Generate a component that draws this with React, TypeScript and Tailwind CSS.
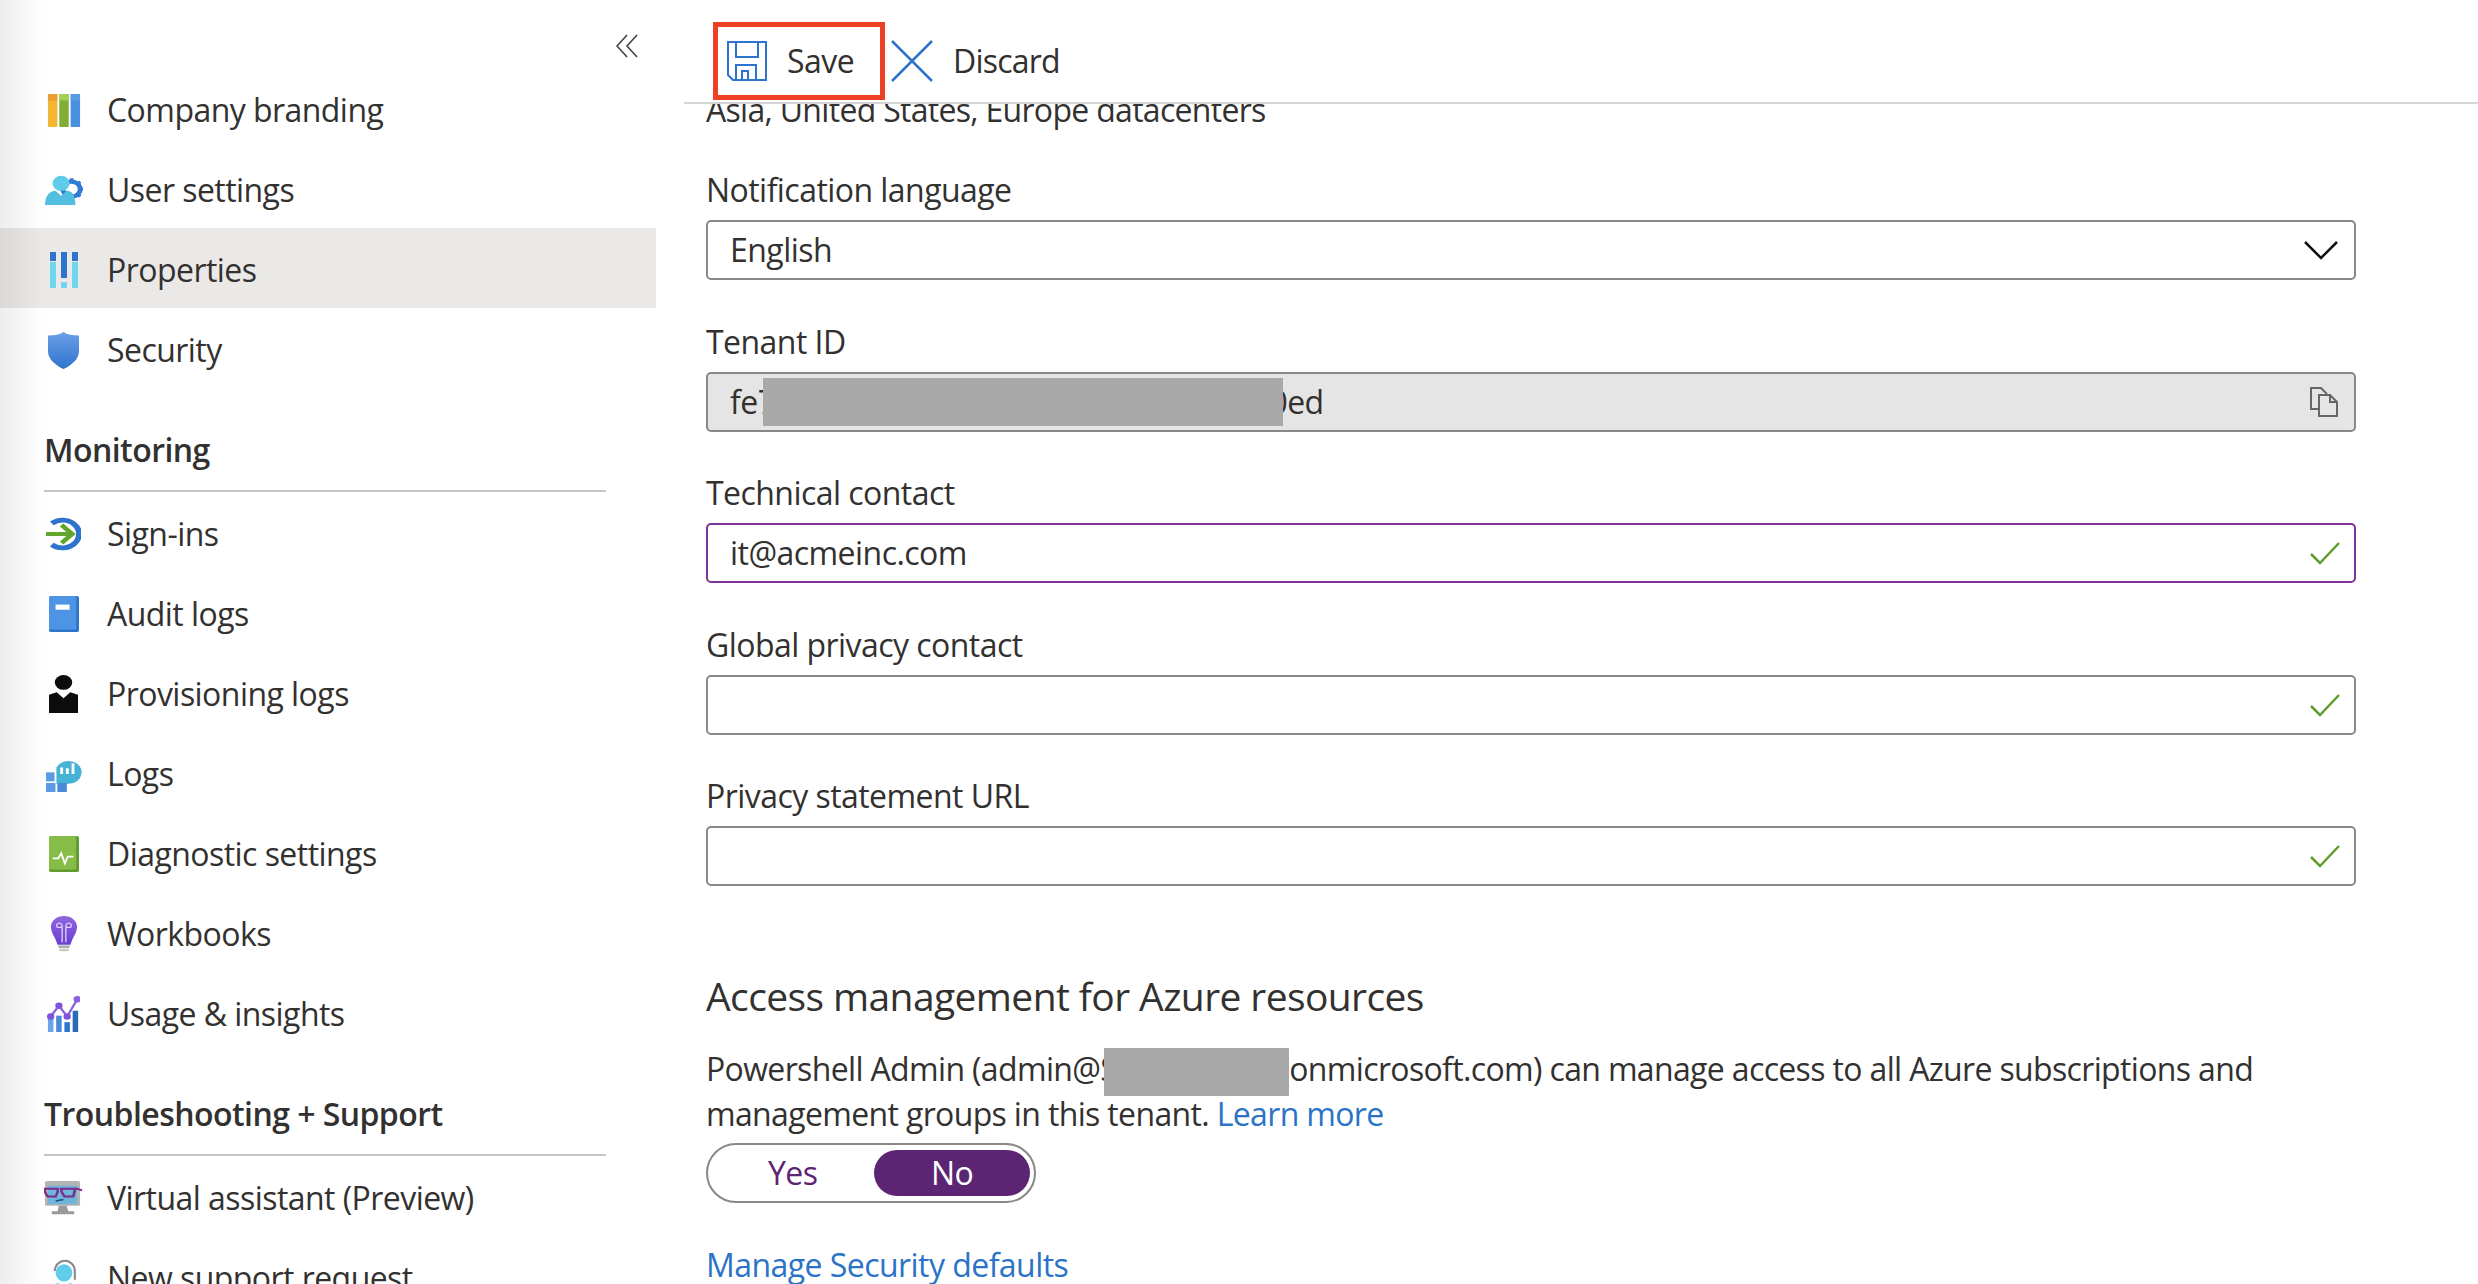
import type { ReactNode } from "react";

const BrandingIcon = () => (
  <svg width="34" height="33" viewBox="0 0 36 36" preserveAspectRatio="none">
    <rect x="1" y="0" width="10" height="36" rx="1" fill="#f2b632" />
    <rect x="1" y="0" width="10" height="7" fill="#ee9c35" />
    <rect x="13" y="0" width="10" height="36" rx="1" fill="#7fae36" />
    <rect x="13" y="0" width="10" height="7" fill="#a3cf55" />
    <rect x="25" y="0" width="10" height="36" rx="1" fill="#4a90e2" />
    <rect x="25" y="0" width="10" height="7" fill="#5a9be6" />
  </svg>
);

const UserSettingsIcon = () => (
  <svg width="38" height="30" viewBox="0 0 40 36" preserveAspectRatio="none">
    <circle cx="28" cy="17" r="9" fill="none" stroke="#2f7bd6" strokeWidth="5" />
    <path d="M28 4v4M28 26v4M15 17h4M37 17h3M19 8l3 3M34 23l3 3M37 8l-3 3" stroke="#2f7bd6" strokeWidth="4" />
    <circle cx="17" cy="10" r="9" fill="#5fcdea" />
    <path d="M0 36c0-11 5-17 11-17l6 6 6-6c6 0 9 6 9 17z" fill="#52bfe0" />
  </svg>
);

const PropertiesIcon = () => (
  <svg width="30" height="36" viewBox="0 0 30 36">
    <rect x="1" y="0" width="6" height="9" fill="#2f74cc" />
    <rect x="1" y="10" width="6" height="26" fill="#6fd6ee" />
    <rect x="12" y="0" width="6" height="26" fill="#2f74cc" />
    <rect x="12" y="30" width="6" height="6" fill="#6fd6ee" />
    <rect x="23" y="0" width="6" height="9" fill="#2f74cc" />
    <rect x="23" y="10" width="6" height="26" fill="#6fd6ee" />
  </svg>
);

const SecurityIcon = () => (
  <svg width="31" height="37" viewBox="0 0 34 42" preserveAspectRatio="none">
    <defs>
      <linearGradient id="shield" x1="0" y1="0" x2="0" y2="1">
        <stop offset="0" stopColor="#6d9fe8" />
        <stop offset="1" stopColor="#2f74cc" />
      </linearGradient>
    </defs>
    <path d="M17 0c4 3 10 4 17 4v18c0 9-9 16-17 20C9 38 0 31 0 22V4c7 0 13-1 17-4z" fill="url(#shield)" />
  </svg>
);

const SignInsIcon = () => (
  <svg width="35" height="36" viewBox="0 0 36 44" preserveAspectRatio="none">
    <path d="M6 9a17 17 0 1 1 0 26" fill="none" stroke="#2f74cc" strokeWidth="6" />
    <path d="M0 22h26M16 11l11 11-11 11" fill="none" stroke="#63a62d" strokeWidth="5" />
  </svg>
);

const AuditIcon = () => (
  <svg width="30" height="36" viewBox="0 0 32 42" preserveAspectRatio="none">
    <rect x="0" y="0" width="32" height="42" rx="2" fill="#2f74cc" />
    <path d="M0 3c0-2 1-3 3-3h26v39H0z" fill="#4e94e4" />
    <rect x="7" y="10" width="15" height="6" fill="#fff" />
  </svg>
);

const ProvisioningIcon = () => (
  <svg width="29" height="38" viewBox="0 0 30 46" preserveAspectRatio="none">
    <circle cx="15" cy="9" r="9" fill="#0c0c0c" />
    <path d="M0 24l8-3 7 7 7-7 8 3v22H0z" fill="#0c0c0c" />
  </svg>
);

const LogsIcon = () => (
  <svg width="36" height="36" viewBox="0 0 38 44" preserveAspectRatio="none">
    <path d="M11 14a14 14 0 1 1 13 20H11z" fill="#46b3d6" />
    <rect x="15" y="14" width="3" height="8" fill="#fff" />
    <rect x="21" y="15" width="3" height="7" fill="#fff" />
    <rect x="27" y="9" width="3" height="13" fill="#fff" />
    <rect x="0" y="20" width="9" height="11" fill="#5b9be6" />
    <rect x="0" y="33" width="10" height="11" fill="#5b9be6" />
    <rect x="12" y="33" width="10" height="11" fill="#4a8ad8" />
  </svg>
);

const DiagnosticIcon = () => (
  <svg width="30" height="36" viewBox="0 0 32 42" preserveAspectRatio="none">
    <rect x="0" y="0" width="32" height="42" rx="2" fill="#5f9b2e" />
    <path d="M0 3c0-2 1-3 3-3h26v39H0z" fill="#86bd48" />
    <path d="M4 26h6l3-6 4 12 3-8h6" fill="none" stroke="#fff" strokeWidth="2" />
  </svg>
);

const WorkbooksIcon = () => (
  <svg width="26" height="36" viewBox="0 0 28 44" preserveAspectRatio="none">
    <defs>
      <linearGradient id="bulb" x1="0" y1="0" x2="0" y2="1">
        <stop offset="0" stopColor="#8f66e0" />
        <stop offset="1" stopColor="#6a3fd0" />
      </linearGradient>
    </defs>
    <path d="M14 0c8 0 14 6 14 13 0 8-5 13-7 22H7C5 26 0 21 0 13 0 6 6 0 14 0z" fill="url(#bulb)" />
    <path d="M12 32V12a3 3 0 1 0-5 2h5M16 32V12a3 3 0 1 1 5 2h-5" fill="none" stroke="#d9ccf6" strokeWidth="1.5" />
    <rect x="8" y="36" width="12" height="3" fill="#a9a9a9" />
    <rect x="9" y="40" width="10" height="3" fill="#c8c8c8" />
  </svg>
);

const UsageIcon = () => (
  <svg width="33" height="36" viewBox="0 0 36 44" preserveAspectRatio="none">
    <rect x="1" y="28" width="6" height="16" fill="#6aa4ea" />
    <rect x="10" y="24" width="6" height="20" fill="#4a8ad8" />
    <rect x="19" y="32" width="6" height="12" fill="#2f74cc" />
    <rect x="28" y="18" width="6" height="26" fill="#2c6bb8" />
    <path d="M4 25l9-13 9 13 11-21" fill="none" stroke="#8a5fe0" strokeWidth="2.5" />
    <circle cx="4" cy="25" r="4" fill="#7e52dc" />
    <circle cx="13" cy="12" r="4" fill="#7e52dc" />
    <circle cx="22" cy="25" r="4" fill="#7e52dc" />
    <circle cx="33" cy="4" r="4" fill="#8a5fe0" />
  </svg>
);

const AssistantIcon = () => (
  <svg width="39" height="34" viewBox="0 0 40 44" preserveAspectRatio="none">
    <rect x="1" y="0" width="36" height="32" rx="2" fill="#b4b4b4" />
    <rect x="4" y="6" width="30" height="24" fill="#6fb5da" />
    <path d="M15 32h8l2 7h6v4H8v-4h6z" fill="#9a9a9a" />
    <path d="M0 10h14v4l-2 6H4l-2-3zM16 10h18l5 2M18 10h14l-2 10h-9l-3-6z" fill="none" stroke="#7c2a8c" strokeWidth="2.5" />
    <path d="M12 26l8-2" stroke="#1f4f8a" strokeWidth="2" />
  </svg>
);

const SupportIcon = () => (
  <svg width="30" height="38" viewBox="0 0 36 44" preserveAspectRatio="none">
    <path d="M7 14a12 12 0 0 1 24 0v10" fill="none" stroke="#8a8a8a" strokeWidth="2.5" />
    <circle cx="18" cy="16" r="10" fill="#5fcdea" />
    <path d="M0 44c0-11 5-16 11-16l7 6 7-6c6 0 9 5 9 16z" fill="#52bfe0" />
  </svg>
);

const NavRow = ({ icon, label, active }: { icon: ReactNode; label: string; active?: boolean }) => (
  <div className={`flex h-[80px] items-center pl-[44px] pt-[4px] ${active ? "bg-[#ebe9e7]" : ""}`}>
    <span className="flex w-[63px] shrink-0 items-center">
      <span className="flex w-[39px] justify-center">{icon}</span>
    </span>
    <span className="whitespace-nowrap">{label}</span>
  </div>
);

const SectionHeading = ({ title }: { title: string }) => (
  <div className="ml-[44px] mr-[50px] mt-[40px] h-[64px] border-b-2 border-[#c8c6c4] font-semibold">{title}</div>
);

const Field = ({
  label,
  children,
  className = "border-[#8a8886]",
}: {
  label: string;
  children?: ReactNode;
  className?: string;
}) => (
  <div>
    <div className="flex h-[44px] items-center">{label}</div>
    <div className={`mt-[8px] flex h-[60px] items-center justify-between overflow-hidden rounded-[5px] border-2 pl-[22px] pr-[16px] ${className}`}>
      {children}
    </div>
  </div>
);

const Check = () => (
  <svg className="-mr-[3px] ml-auto shrink-0" width="32" height="24" viewBox="0 0 32 24">
    <path d="M2 13l9 9L30 2" fill="none" stroke="#5f9e2f" strokeWidth="2.5" />
  </svg>
);

export default function App() {
  return (
    <div className="flex h-[1284px] w-[2478px] overflow-hidden bg-white font-['Open_Sans',sans-serif] text-[32px] leading-[44px] tracking-[-0.55px] text-[#323130]">
      {/* Left menu */}
      <aside className="relative w-[656px] shrink-0 overflow-hidden">
        <div className="flex h-[68px] items-start justify-end pr-[18px] pt-[34px]">
          <svg width="22" height="24" viewBox="0 0 22 24">
            <path d="M11 1L1 12l10 11M21 1L11 12l10 11" fill="none" stroke="#444" strokeWidth="1.6" />
          </svg>
        </div>
        <NavRow icon={<BrandingIcon />} label="Company branding" />
        <NavRow icon={<UserSettingsIcon />} label="User settings" />
        <NavRow icon={<PropertiesIcon />} label="Properties" active />
        <NavRow icon={<SecurityIcon />} label="Security" />
        <SectionHeading title="Monitoring" />
        <NavRow icon={<SignInsIcon />} label="Sign-ins" />
        <NavRow icon={<AuditIcon />} label="Audit logs" />
        <NavRow icon={<ProvisioningIcon />} label="Provisioning logs" />
        <NavRow icon={<LogsIcon />} label="Logs" />
        <NavRow icon={<DiagnosticIcon />} label="Diagnostic settings" />
        <NavRow icon={<WorkbooksIcon />} label="Workbooks" />
        <NavRow icon={<UsageIcon />} label="Usage & insights" />
        <SectionHeading title="Troubleshooting + Support" />
        <NavRow icon={<AssistantIcon />} label="Virtual assistant (Preview)" />
        <NavRow icon={<SupportIcon />} label="New support request" />
        <div className="pointer-events-none absolute inset-y-0 left-0 w-[44px] bg-gradient-to-r from-black/[0.07] to-transparent" />
      </aside>

      {/* Main */}
      <main className="flex min-w-0 flex-1 flex-col">
        <div className="relative z-10 ml-[28px] flex h-[104px] shrink-0 items-start border-b-2 border-[#d6d6d6] bg-white">
          <div className="ml-[29px] mt-[22px] flex h-[78px] w-[172px] items-center border-[5px] border-[#ee4024] pl-[9px]">
            <svg className="shrink-0" width="40" height="40" viewBox="0 0 40 40">
              <path d="M1 1h38v38H6l-5-5zM9 1v15h22V1M9 39V24h20v15M15 39v-9h6v9" fill="none" stroke="#2f74cc" strokeWidth="2" />
            </svg>
            <span className="ml-[20px]">Save</span>
          </div>
          <div className="ml-[6px] mt-[22px] flex h-[78px] items-center">
            <svg className="shrink-0" width="42" height="42" viewBox="0 0 42 42">
              <path d="M1 1l40 40M41 1L1 41" fill="none" stroke="#2f74cc" strokeWidth="2.5" />
            </svg>
            <span className="ml-[20px] tracking-[-0.8px]">Discard</span>
          </div>
        </div>

        <div className="min-h-0 flex-1 overflow-hidden pl-[50px] pr-[122px]">
          <div className="-mt-[16px] flex h-[44px] items-center tracking-[-0.7px]">Asia, United States, Europe datacenters</div>
          <div className="mt-[36px] flex flex-col gap-[39.5px]">
            <Field label="Notification language">
              <span>English</span>
              <svg className="shrink-0" width="34" height="20" viewBox="0 0 34 20">
                <path d="M1 2l16 16L33 2" fill="none" stroke="#111" strokeWidth="2.5" />
              </svg>
            </Field>
            <Field label="Tenant ID" className="border-[#8a8886] bg-[#e5e5e5]">
              <span className="flex items-center whitespace-nowrap">
                fe7
                <span className="relative z-10 -ml-[12px] h-[48px] w-[520px] bg-[#a9a9a9]" />
                <span className="-ml-[14px]">0ed</span>
              </span>
              <svg className="shrink-0" width="28" height="30" viewBox="0 0 28 30">
                <path d="M8 22H1V1h10l6 6M9 8h11l7 7v14H9zM20 8v7h7" fill="none" stroke="#666" strokeWidth="2" />
              </svg>
            </Field>
            <Field label="Technical contact" className="border-[#7f3399]">
              <span>it@acmeinc.com</span>
              <Check />
            </Field>
            <Field label="Global privacy contact">
              <Check />
            </Field>
            <Field label="Privacy statement URL">
              <Check />
            </Field>
          </div>

          <h2 className="mt-[84px] text-[39px] leading-[52px] tracking-[-0.6px]">Access management for Azure resources</h2>
          <p className="mt-[25px] tracking-[-0.65px]">
            Powershell Admin (admin@S
            <span className="relative z-10 -my-[4px] -ml-[13px] inline-block h-[48px] w-[185px] bg-[#a9a9a9] align-middle" />
            onmicrosoft.com) can manage access to all Azure subscriptions and management groups in this tenant.{" "}
            <span className="text-[#2a73c7]">Learn more</span>
          </p>
          <div className="mt-[7px] flex h-[60px] w-[330px] items-center rounded-full border-2 border-[#8a8886] pl-[60px] pr-[4px]">
            <span className="text-[#5c2574]">Yes</span>
            <span className="ml-auto flex h-[46px] w-[156px] items-center justify-center rounded-full bg-[#5c2574] text-white">No</span>
          </div>
          <div className="mt-[40px] text-[#2a73c7]">Manage Security defaults</div>
        </div>
      </main>
    </div>
  );
}
